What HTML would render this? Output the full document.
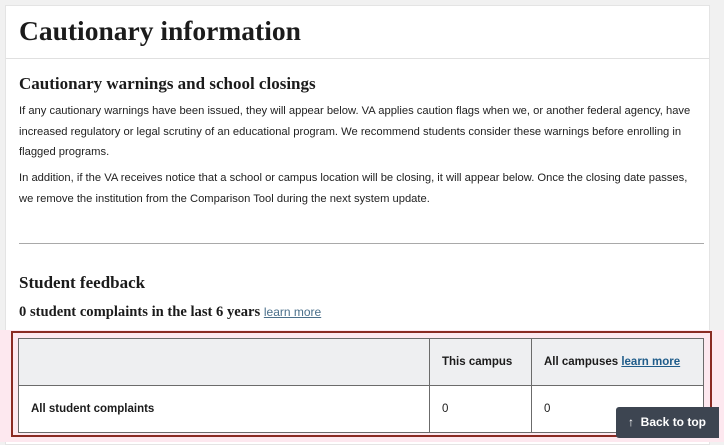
<!DOCTYPE html>
<html><head><meta charset="utf-8"><style>
*{margin:0;padding:0;box-sizing:border-box}
body{width:724px;height:442px;overflow:hidden;background:#f1f1f1;font-family:"Liberation Sans",sans-serif;color:#1b1b1b;position:relative}
.card{position:absolute;left:5px;top:5px;width:705px;height:440px;background:#fff;border:1px solid #e4e4e4}
.hdr{position:absolute;left:0;top:0;width:100%;height:53px;border-bottom:1px solid #e0e0e0}
h1{position:absolute;left:13px;top:9px;font-family:"Liberation Serif",serif;font-weight:bold;font-size:27.5px;white-space:nowrap}
h2{position:absolute;left:13px;font-family:"Liberation Serif",serif;font-weight:bold;font-size:17px;white-space:nowrap}
p{position:absolute;left:13px;font-size:11.2px;line-height:20.5px;white-space:nowrap;color:#222}
.hr{position:absolute;left:13px;top:237px;width:685px;height:1px;background:#a9a9a9}
.pink{position:absolute;left:0;top:330px;width:724px;height:112px;background:#fde8ef}
.box{position:absolute;left:11px;top:331px;width:701px;height:106px;border:2px solid #8a2a22}
table{position:absolute;left:18px;top:338px;width:686px;border-collapse:collapse;font-size:11.5px;font-weight:bold}
td{border:1px solid #6b6b6b;padding:0 12px;vertical-align:middle}
tr.h td{background:#eeeff1;height:47px}
tr.b td{background:#fff;height:47px}
a{color:#1f5c8a;text-decoration:underline}
.btt{position:absolute;left:616px;top:407px;width:103px;height:31px;background:#3d4551;color:#fff;font-weight:bold;font-size:12px;line-height:31px;padding-left:12px;border-radius:3px 0 0 3px}
</style></head><body>
<div class="card">
<div class="hdr"><h1>Cautionary information</h1></div>
<h2 style="top:68px">Cautionary warnings and school closings</h2>
<p style="top:95px">If any cautionary warnings have been issued, they will appear below. VA applies caution flags when we, or another federal agency, have<br>increased regulatory or legal scrutiny of an educational program. We recommend students consider these warnings before enrolling in<br>flagged programs.</p>
<p style="top:162px">In addition, if the VA receives notice that a school or campus location will be closing, it will appear below. Once the closing date passes,<br>we remove the institution from the Comparison Tool during the next system update.</p>
<div class="hr"></div>
<h2 style="top:267px">Student feedback</h2>
<div style="position:absolute;left:13px;top:298px;font-family:'Liberation Serif',serif;font-weight:bold;font-size:14.6px;white-space:nowrap">0 student complaints in the last 6 years <a style="font-family:'Liberation Sans',sans-serif;font-weight:normal;font-size:12px;color:#4a6f8a">learn more</a></div>
</div>
<div class="pink"></div>
<div class="box"></div>
<table>
<tr class="h"><td style="width:411px"></td><td style="width:102px">This campus</td><td>All campuses <a>learn more</a></td></tr>
<tr class="b"><td>All student complaints</td><td style="font-weight:normal">0</td><td style="font-weight:normal">0</td></tr>
</table>
<div class="btt">↑&nbsp;&nbsp;Back to top</div>
</body></html>
